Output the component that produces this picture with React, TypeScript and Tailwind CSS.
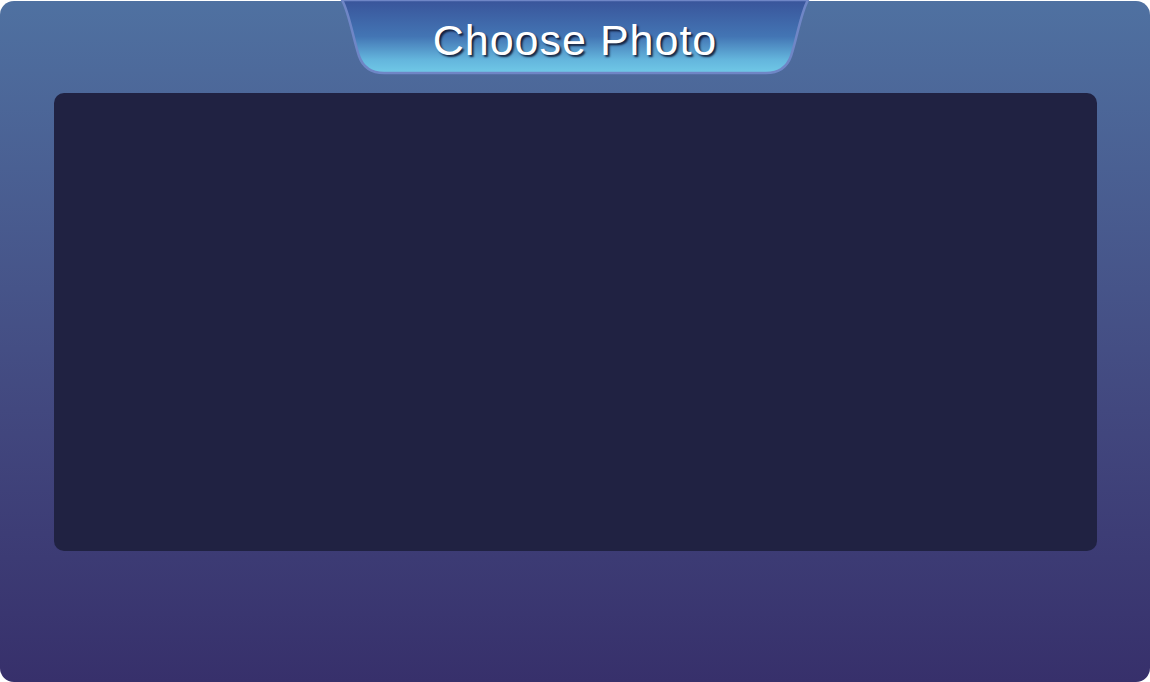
export default function App() {
  return (
    <div className="w-[1150px] h-[682px] bg-white pt-px">
      <div className="relative w-full h-[681px] rounded-[14px] bg-linear-to-b from-[#4f71a1] via-[#42487f] via-60% to-[#37306b] flex flex-col items-center">
        {/* title tab */}
        <div className="relative w-[470px] h-[76px] -mt-px flex items-start justify-center">
          <svg
            className="absolute inset-0"
            width="470"
            height="76"
            viewBox="0 0 470 76"
          >
            <defs>
              <linearGradient id="tabFill" x1="0" y1="0" x2="0" y2="1">
                <stop offset="0" stopColor="#39549a" />
                <stop offset="0.5" stopColor="#4375b4" />
                <stop offset="0.82" stopColor="#64b6dd" />
                <stop offset="1" stopColor="#70c9e7" />
              </linearGradient>
            </defs>
            <path
              d="M2,0 C9,12 13,38 19,56 Q25,73 44,73 L426,73 Q445,73 451,56 C457,38 461,12 468,0 Z"
              fill="url(#tabFill)"
              stroke="#6f86c6"
              strokeWidth="2.5"
            />
          </svg>
          <span className="relative mt-[15px] text-[43px] leading-[50px] tracking-[1px] text-white font-['Liberation_Sans',Arial,sans-serif] [text-shadow:2px_2px_2px_rgba(10,15,40,0.85)]">
            Choose Photo
          </span>
        </div>
        <div className="mt-[17px] w-[1043px] h-[458px] rounded-[10px] bg-[#202242]" />
      </div>
    </div>
  );
}
